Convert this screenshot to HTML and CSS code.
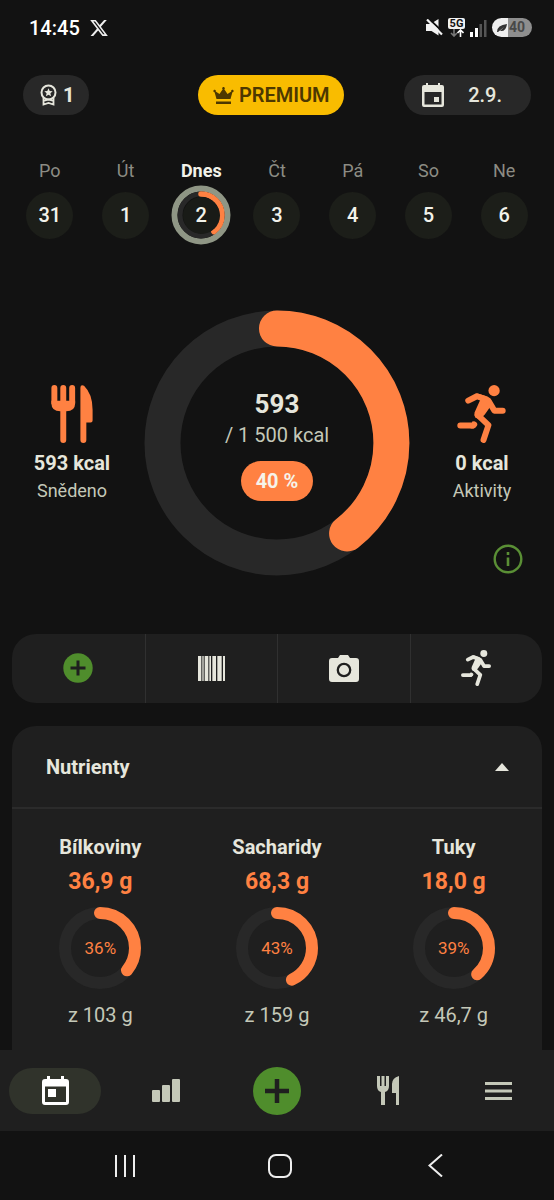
FILE: index.html
```
<!DOCTYPE html>
<html lang="cs">
<head>
<meta charset="utf-8">
<meta name="viewport" content="width=device-width, initial-scale=1">
<title>Nutrienty</title>
<link rel="stylesheet" href="styles.css">
</head>
<body>
<svg class="sprite" aria-hidden="true">
  <symbol id="runner" viewBox="0 0 146 175">
    <circle cx="111" cy="17" r="17" fill="currentColor"/>
    <path d="M54 27Q60 24 67 27L91 35Q101 39 103 49L101 63L83 89L68 104L54 98Q50 91 52 83L70 43Z" fill="currentColor"/>
    <path d="M33 47L59 34L82 42M95 49L112 78H137M62 91L94 121L79 166M9 122H49L51 119" fill="none" stroke="currentColor" stroke-width="18" stroke-linecap="round" stroke-linejoin="round"/>
    <path d="M46 109l13 12-10 10h-9z" fill="currentColor"/>
  </symbol>
</svg>
<header class="status">
  <div class="status-side">
    <span class="clock">14:45</span>
    <svg width="18" height="18" viewBox="1 2 22 20" fill="#eee"><path d="M18.244 2.25h3.308l-7.227 8.26 8.502 11.24H16.17l-5.214-6.817L4.99 21.75H1.68l7.73-8.835L1.254 2.25H8.08l4.713 6.231zm-1.161 17.52h1.833L7.084 4.126H5.117z"/></svg>
  </div>
  <div class="status-side status-right">
    <svg width="17" height="17" viewBox="0 0 17 17"><path d="M0 5h4.500L12.500 0v16.500L5.500 12H0z" fill="#f2f2f2"/><path d="M3 0L17 13" stroke="#121212" stroke-width="2"/><path d="M1 0.500L16 15.500" stroke="#f2f2f2" stroke-width="2.200"/></svg>
    <div class="network"><span class="network-type">5G</span>
      <svg width="14" height="8" viewBox="0 0 14 8" fill="none" stroke-width="1.600"><path d="M4 0v7M1 4l3 3 3-3" stroke="#777"/><path d="M10.500 8V1M7.500 4l3-3 3 3" stroke="#fff"/></svg>
    </div>
    <svg width="17" height="18" viewBox="0 0 17 18"><path d="M0 13h3v5H0zM5 9h3v9H5z" fill="#fff"/><path d="M9.500 5h2.500v13H9.500zM14 1h2.500v17H14z" fill="#555"/></svg>
    <div class="battery"><svg width="10" height="8" viewBox="0 0 10 8"><path d="M0 8Q0 1 10 0Q9 8 3 7L7 3L1 8z" fill="#333"/></svg><span>40</span></div>
  </div>
</header>

<main class="main">
  <div class="topbar">
    <button class="pill streak">
      <svg width="17" height="22" viewBox="0 0 17 22"><circle cx="8.500" cy="8.500" r="7" fill="none" stroke="#e6e6dc" stroke-width="2"/><path d="M8.500 4.300l1.200 2.800 3 .2-2.300 2 .7 3-2.600-1.600-2.600 1.600.7-3-2.300-2 3-.2z" fill="#e6e6dc"/><path d="M3.500 14v6.500l5-1.500 5 1.500V14M3.500 17l5-1.500 5 1.500" fill="none" stroke="#e6e6dc" stroke-width="1.800"/></svg>
      <span>1</span>
    </button>
    <button class="pill premium">
      <svg width="21" height="17" viewBox="0 0 21 17" fill="#4d3800"><path d="M3.500 12L1.600 5.200A1.200 1.200 0 1 1 2.700 4.500L6.500 7 9.700 2.300A1.300 1.300 0 1 1 11.300 2.300L14.500 7 18.300 4.500A1.200 1.200 0 1 1 19.400 5.200L17.500 12zM3 14.500h15V17H3z"/></svg>
      <span>PREMIUM</span>
    </button>
    <button class="pill date">
      <svg width="22" height="24" viewBox="0 0 22 24"><path d="M4 0h2v2h10V0h2v2h2q2 0 2 2v18q0 2-2 2H2q-2 0-2-2V4q0-2 2-2h2zM2.500 9v12.500h17V9zM12 14h5v5h-5z" fill="#e6e6dc" fill-rule="evenodd"/></svg>
      <span>2.9.</span>
    </button>
  </div>

  <div class="week">
    <button class="day"><span>Po</span><span class="slot"><span class="dot">31</span></span></button>
    <button class="day"><span>Út</span><span class="slot"><span class="dot">1</span></span></button>
    <button class="day today"><span>Dnes</span><span class="slot">
      <svg viewBox="0 0 60 60" fill="none"><circle cx="30" cy="30" r="26.500" stroke="#8f9685" stroke-width="6"/><circle cx="30" cy="30" r="21" stroke="#282828" stroke-width="5"/><circle cx="30" cy="30" r="21" pathLength="100" stroke="#ff8142" stroke-width="5.500" stroke-linecap="round" stroke-dasharray="39.500 100" transform="rotate(-90 30 30)"/></svg>
      <span class="dot">2</span></span></button>
    <button class="day"><span>Čt</span><span class="slot"><span class="dot">3</span></span></button>
    <button class="day"><span>Pá</span><span class="slot"><span class="dot">4</span></span></button>
    <button class="day"><span>So</span><span class="slot"><span class="dot">5</span></span></button>
    <button class="day"><span>Ne</span><span class="slot"><span class="dot">6</span></span></button>
  </div>

  <section class="summary">
    <div class="stat">
      <svg width="42" height="58" viewBox="0 0 125 176" fill="#ff8142"><path d="M9 9V54M36 9V167M63 9V54" fill="none" stroke="#ff8142" stroke-width="18" stroke-linecap="round"/><path d="M0 48H72V55Q72 79 45 80H27Q0 79 0 55z"/><path d="M88 8Q88-2 99 2Q125 27 125 75V108Q125 114 119 114H106V167A9 9 0 0 1 88 167z"/></svg>
      <strong>593 kcal</strong><span>Snědeno</span>
    </div>
    <div class="ring">
      <svg viewBox="0 0 266 266" fill="none"><circle cx="133" cy="133" r="114.500" stroke="#282828" stroke-width="36"/><circle cx="133" cy="133" r="114.500" pathLength="100" stroke="#ff8142" stroke-width="36" stroke-linecap="round" stroke-dasharray="39.500 100" transform="rotate(-90 133 133)"/></svg>
      <div class="ring-text"><strong>593</strong><span>/ 1 500 kcal</span><b class="percent">40 %</b></div>
    </div>
    <div class="stat stat-activity">
      <svg width="49" height="58"><use href="#runner"/></svg>
      <strong>0 kcal</strong><span>Aktivity</span>
    </div>
    <button class="info" aria-label="Informace"><svg width="30" height="30" viewBox="0 0 30 30" fill="none" stroke="#5a8f35"><circle cx="15" cy="15" r="13.300" stroke-width="2.400"/><path d="M15 13.500V22M15 8v3" stroke-width="2.600"/></svg></button>
  </section>

  <div class="actions">
    <button aria-label="Přidat"><svg width="30" height="30" viewBox="0 0 30 30"><circle cx="15" cy="15" r="14.700" fill="#4f8d2c"/><path d="M15 7.500v15M7.500 15h15" stroke="#1f1f1f" stroke-width="3"/></svg></button>
    <button aria-label="Čárový kód"><svg width="27" height="25" viewBox="0 0 81 75" fill="#e6e6dc"><path d="M0 0h10v75H0zM13 0h4v75h-4zM20 0h11v75H20zM34 0h5v75h-5zM43 0h11v75H43zM58 0h13v75H58zM75 0h6v75h-6z"/></svg></button>
    <button aria-label="Fotoaparát"><svg width="30" height="27" viewBox="0 0 30 27"><path d="M3 3h6l2-3h8l2 3h6q3 0 3 3v18q0 3-3 3H3q-3 0-3-3V6q0-3 3-3z" fill="#e6e6dc"/><circle cx="15" cy="15" r="6.200" fill="none" stroke="#1f1f1f" stroke-width="2.300"/></svg></button>
    <button aria-label="Aktivita"><svg width="30" height="36"><use href="#runner"/></svg></button>
  </div>

  <section class="card">
    <button class="card-head"><span>Nutrienty</span><svg width="14" height="8" viewBox="0 0 14 8"><path d="M0 8L7 0l7 8z" fill="#e6e6dc"/></svg></button>
    <div class="nutrients">
      <div class="nutrient"><h3>Bílkoviny</h3><strong>36,9 g</strong>
        <div class="mini"><svg viewBox="0 0 82 82" fill="none"><circle cx="41" cy="41" r="35" stroke="#282828" stroke-width="12"/><circle cx="41" cy="41" r="35" pathLength="100" stroke="#ff8142" stroke-width="12" stroke-linecap="round" stroke-dasharray="36 100" transform="rotate(-90 41 41)"/></svg><span>36%</span></div>
        <span>z 103 g</span></div>
      <div class="nutrient"><h3>Sacharidy</h3><strong>68,3 g</strong>
        <div class="mini"><svg viewBox="0 0 82 82" fill="none"><circle cx="41" cy="41" r="35" stroke="#282828" stroke-width="12"/><circle cx="41" cy="41" r="35" pathLength="100" stroke="#ff8142" stroke-width="12" stroke-linecap="round" stroke-dasharray="43 100" transform="rotate(-90 41 41)"/></svg><span>43%</span></div>
        <span>z 159 g</span></div>
      <div class="nutrient"><h3>Tuky</h3><strong>18,0 g</strong>
        <div class="mini"><svg viewBox="0 0 82 82" fill="none"><circle cx="41" cy="41" r="35" stroke="#282828" stroke-width="12"/><circle cx="41" cy="41" r="35" pathLength="100" stroke="#ff8142" stroke-width="12" stroke-linecap="round" stroke-dasharray="38.500 100" transform="rotate(-90 41 41)"/></svg><span>39%</span></div>
        <span>z 46,7 g</span></div>
    </div>
  </section>
</main>

<nav class="tabs">
  <button class="active" aria-label="Deník"><svg width="27" height="29" viewBox="0 0 27 29"><path d="M5 0h3v3h11V0h3v3h2q3 0 3 3v20q0 3-3 3H3q-3 0-3-3V6q0-3 3-3h2zM3 10.500V26h21V10.500zM6 13h8v8H6z" fill="#fff" fill-rule="evenodd"/></svg></button>
  <button aria-label="Statistiky"><svg width="28" height="23" viewBox="0 0 28 23" fill="#c4c8b8"><rect y="11" width="8" height="12" rx="1"/><rect x="10" y="6" width="8" height="17" rx="1"/><rect x="20" width="8" height="23" rx="1"/></svg></button>
  <button class="add" aria-label="Přidat"><svg width="24" height="24" viewBox="0 0 24 24"><path d="M12 0v24M0 12h24" stroke="#1f1f1f" stroke-width="4.500"/></svg></button>
  <button aria-label="Jídelníček"><svg width="22" height="29" viewBox="0 0 22 29" fill="#c4c8b8"><path d="M0 0h3v10h1.500V0h3v10H9V0h3v10q0 5-4 6v13H4V16q-4-1-4-6zM22 0v29h-3V17h-4V8q0-6 7-8z"/></svg></button>
  <button aria-label="Nabídka"><svg width="27" height="18" viewBox="0 0 27 18" fill="#c4c8b8"><path d="M0 0h27v3H0zM0 7.500h27v3H0zM0 15h27v3H0z"/></svg></button>
</nav>
<footer class="system">
  <button aria-label="Poslední aplikace"><svg width="22" height="22" viewBox="0 0 22 22" stroke="#eee" stroke-width="2"><path d="M2 0v22M11 0v22M20 0v22"/></svg></button>
  <button aria-label="Domů"><svg width="24" height="24" viewBox="0 0 24 24" fill="none" stroke="#eee" stroke-width="2"><rect x="1" y="1" width="22" height="22" rx="7"/></svg></button>
  <button aria-label="Zpět"><svg width="15" height="23" viewBox="0 0 15 23" fill="none" stroke="#eee" stroke-width="2"><path d="M14 0.500L1.500 11.500L14 22.500"/></svg></button>
</footer>
</body>
</html>
```
FILE: styles.css
```
* { box-sizing: border-box; }
body {
  margin: 0;
  min-height: 100vh;
  display: flex;
  flex-direction: column;
  background: #121212;
  color: #e6e6dc;
  font: 400 20px/28px Roboto, "Noto Sans", sans-serif;
}
button {
  margin: 0;
  padding: 0;
  border: 0;
  background: none;
  color: inherit;
  font: inherit;
}
svg { display: block; flex: none; }
.sprite { position: absolute; width: 0; height: 0; }

.status {
  display: flex;
  justify-content: space-between;
  align-items: center;
  height: 55px;
  padding: 0 22px 0 29px;
}
.status-side { display: flex; align-items: center; gap: 10px; }
.status-right { gap: 5px; }
.clock { color: #fff; font-weight: 500; }
.network { display: flex; flex-direction: column; align-items: center; }
.network-type {
  width: 17px;
  border-radius: 2px;
  background: #f2f2f2;
  color: #121212;
  font-size: 11px;
  font-weight: 700;
  line-height: 11px;
  text-align: center;
}
.battery {
  display: flex;
  align-items: center;
  gap: 2px;
  width: 40px;
  height: 19px;
  padding-left: 5px;
  border-radius: 10px;
  background: linear-gradient(90deg, #eee 16px, #8e8e8e 16px);
  color: #484848;
  font-size: 14px;
  font-weight: 700;
  line-height: 19px;
}

.main { flex: 1; display: flex; flex-direction: column; }
.topbar {
  display: grid;
  grid-template-columns: 14fr auto 15fr;
  padding: 20px 23px 0;
}
.pill {
  display: flex;
  align-items: center;
  justify-content: center;
  height: 40px;
  border-radius: 20px;
  background: #282828;
}
.streak { justify-self: start; gap: 6px; padding: 0 15px 0 17px; font-weight: 700; }
.premium { gap: 5px; padding: 0 14px 0 15px; background: #f9bc00; color: #4d3800; font-weight: 600; }
.date { justify-self: end; gap: 24px; padding: 0 29px 0 18px; font-weight: 500; }

.week { display: grid; grid-template-columns: repeat(7, 1fr); padding: 42px 12px 0; }
.day {
  display: flex;
  flex-direction: column;
  align-items: center;
  color: #8c8c84;
  font-size: 18px;
}
.today { color: #f2f2ea; font-weight: 700; }
.slot { display: grid; place-items: center; width: 60px; height: 60px; }
.slot > * { grid-area: 1 / 1; }
.slot svg { width: 60px; height: 60px; }
.dot {
  width: 47px;
  border-radius: 50%;
  background: #1c1e19;
  color: #f2f2ea;
  font-size: 20px;
  font-weight: 500;
  line-height: 47px;
  text-align: center;
}
.today .dot { width: 37px; line-height: 37px; background: #191b17; }

.summary {
  display: grid;
  grid-template-columns: 1fr 48% 1fr;
  align-items: center;
  padding: 65px 0 58px;
}
.stat { display: flex; flex-direction: column; align-items: center; padding-top: 4px; }
.stat svg { margin-bottom: 6px; color: #ff8142; }
.stat strong { font-weight: 700; }
.stat span { color: #c4c8b8; font-size: 18px; }
.stat-activity, .info { grid-column: 3; grid-row: 1; }
.info { align-self: end; justify-self: end; margin: 0 31px 2px 0; }
.ring { display: grid; place-items: center; }
.ring > * { grid-area: 1 / 1; }
.ring svg { width: 100%; }
.ring-text { display: flex; flex-direction: column; align-items: center; padding-top: 2px; }
.ring-text strong { font-size: 26px; line-height: 34px; }
.ring-text span { color: #c4c8b8; }
.percent {
  margin-top: 12px;
  padding: 0 15px;
  border-radius: 20px;
  background: #ff8142;
  color: #f6f3ea;
  line-height: 40px;
}

.actions {
  display: grid;
  grid-template-columns: repeat(4, 1fr);
  height: 69px;
  margin: 0 12px;
  border-radius: 24px;
  background: #1f1f1f;
}
.actions button { display: grid; place-items: center; }
.actions button + button { border-left: 1px solid #303030; }

.card {
  flex: 1;
  margin: 23px 12px 0;
  border-radius: 24px 24px 0 0;
  background: #1f1f1f;
}
.card-head {
  display: flex;
  align-items: center;
  justify-content: space-between;
  width: 100%;
  height: 83px;
  padding: 1px 33px 0 34px;
  border-bottom: 2px solid #2b2b2b;
  font-weight: 700;
}
.nutrients { display: grid; grid-template-columns: repeat(3, 1fr); padding-top: 24px; }
.nutrient { display: flex; flex-direction: column; align-items: center; color: #c4c8b8; }
.nutrient h3 { margin: 0; color: #e6e6dc; font-size: 20px; font-weight: 700; }
.nutrient strong { margin: 7px 0 11px; color: #ff8142; font-size: 23px; }
.mini { display: grid; place-items: center; margin-bottom: 12px; }
.mini > * { grid-area: 1 / 1; }
.mini svg { width: 82px; height: 82px; }
.mini span { color: #ff8142; font-size: 17px; }

.tabs {
  display: grid;
  grid-template-columns: repeat(5, 1fr);
  align-items: center;
  height: 81px;
  background: #1f1f1f;
}
.tabs button {
  display: grid;
  place-items: center;
  justify-self: center;
  width: 92px;
  height: 46px;
  border-radius: 23px;
}
.tabs .active { background: #30332b; }
.tabs .add { width: 48px; height: 48px; border-radius: 50%; background: #4f8d2c; }
.system {
  display: grid;
  grid-template-columns: repeat(3, 1fr);
  height: 69px;
  padding: 0 41px 0 47px;
}
.system button { display: grid; place-items: center; }
```
